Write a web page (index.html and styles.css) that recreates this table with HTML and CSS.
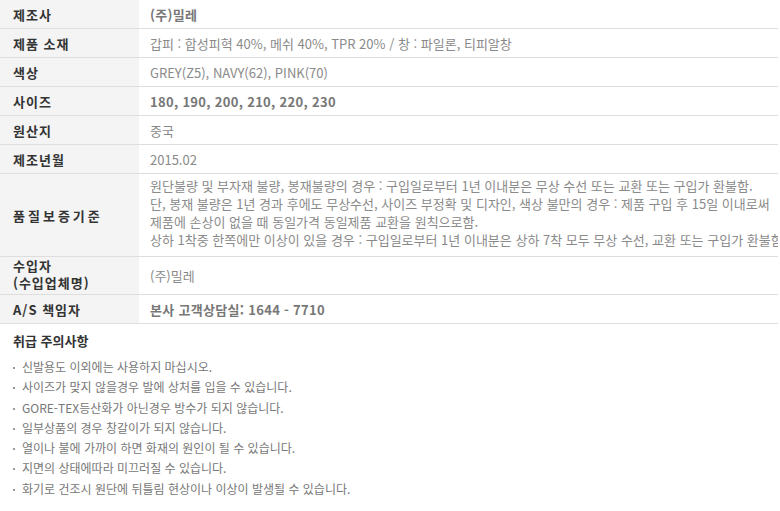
FILE: index.html
```html
<!DOCTYPE html>
<html lang="ko">
<head>
<meta charset="utf-8">
<link rel="stylesheet" href="styles.css">
</head>
<body>
<table class="spec">
  <colgroup><col class="c-label"><col></colgroup>
  <tr><th>제조사</th><td class="strong">(주)밀레</td></tr>
  <tr><th>제품 소재</th><td>갑피 : 합성피혁 40%, 메쉬 40%, TPR 20% / 창 : 파일론, 티피알창</td></tr>
  <tr><th>색상</th><td>GREY(Z5), NAVY(62), PINK(70)</td></tr>
  <tr><th>사이즈</th><td class="strong">180, 190, 200, 210, 220, 230</td></tr>
  <tr><th>원산지</th><td>중국</td></tr>
  <tr><th>제조년월</th><td>2015.02</td></tr>
  <tr class="tall"><th class="wide">품질보증기준</th><td class="multi"><div class="clip">원단불량 및 부자재 불량, 봉재불량의 경우 : 구입일로부터 1년 이내분은 무상 수선 또는 교환 또는 구입가 환불함.<br>단, 봉재 불량은 1년 경과 후에도 무상수선, 사이즈 부정확 및 디자인, 색상 불만의 경우 : 제품 구입 후 15일 이내로써<br>제품에 손상이 없을 때 동일가격 동일제품 교환을 원칙으로함.<br>상하 1착중 한쪽에만 이상이 있을 경우 : 구입일로부터 1년 이내분은 상하 7착 모두 무상 수선, 교환 또는 구입가 환불함.</div></td></tr>
  <tr class="mid"><th class="two">수입자<br>(수입업체명)</th><td>(주)밀레</td></tr>
  <tr><th>A/S 책임자</th><td class="strong">본사 고객상담실: 1644 - 7710</td></tr>
</table>
<section class="notes">
  <h3>취급 주의사항</h3>
  <ul>
    <li>신발용도 이외에는 사용하지 마십시오.</li>
    <li>사이즈가 맞지 않을경우 발에 상처를 입을 수 있습니다.</li>
    <li>GORE-TEX등산화가 아닌경우 방수가 되지 않습니다.</li>
    <li>일부상품의 경우 창갈이가 되지 않습니다.</li>
    <li>열이나 불에 가까이 하면 화재의 원인이 될 수 있습니다.</li>
    <li>지면의 상태에따라 미끄러질 수 있습니다.</li>
    <li>화기로 건조시 원단에 뒤틀림 현상이나 이상이 발생될 수 있습니다.</li>
  </ul>
</section>
</body>
</html>
```

FILE: styles.css
```css
html, body {
  margin: 0;
  padding: 0;
  background: #fff;
}
body {
  font-family: "Noto Sans CJK KR", "Noto Sans", sans-serif;
  font-size: 12px;
  color: #888;
}
.spec {
  width: 778px;
  border-collapse: collapse;
  table-layout: fixed;
}
.c-label { width: 139px; }
.spec th, .spec td {
  height: 28px;
  padding: 0;
  border-bottom: 1px solid #dedede;
  vertical-align: middle;
  text-align: left;
  white-space: nowrap;
}
.spec th {
  background: #f4f4f4;
  padding-left: 13px;
  font-size: 13px;
  font-weight: bold;
  color: #333;
  letter-spacing: 1px;
  line-height: 17px;
}
.spec th.wide { letter-spacing: 3px; }
.spec th.two {
  line-height: 17px;
  padding-bottom: 3px;
  height: 33px;
}
.spec td {
  padding-left: 11px;
  font-size: 13px;
  color: #8a8a8a;
  overflow: hidden;
}
.spec td.strong {
  font-weight: bold;
  color: #777;
  letter-spacing: 0.3px;
}
.spec tr.tall th, .spec tr.tall td { height: 82px; }
.spec tr.tall td { height: 78px; padding-bottom: 4px; }
.spec tr.mid td { height: 36px; }
.spec td.multi { line-height: 18px; }
.clip { overflow: hidden; white-space: nowrap; }
.notes {
  padding: 7px 0 0 13px;
}
.notes h3 {
  margin: 0 0 6px;
  font-size: 13px;
  font-weight: bold;
  color: #333;
  line-height: 20px;
}
.notes ul {
  margin: 0;
  padding: 0;
  list-style: none;
}
.notes li {
  position: relative;
  padding-left: 9px;
  line-height: 20.3px;
  color: #777;
}
.notes li::before {
  content: "";
  position: absolute;
  left: 0;
  top: 10px;
  width: 2px;
  height: 2px;
  background: #999;
}
```
